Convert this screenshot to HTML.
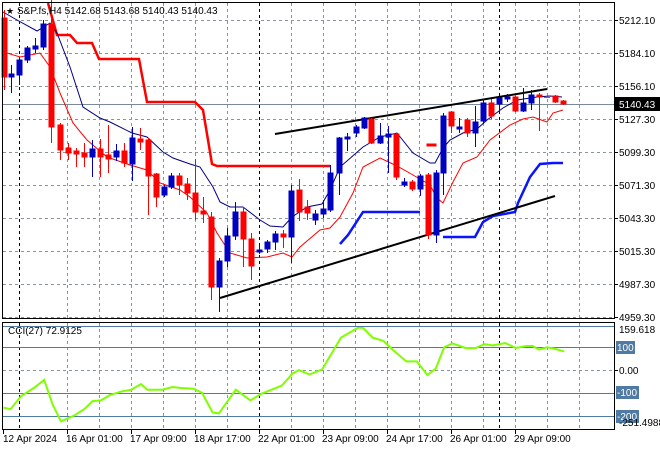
<!DOCTYPE html>
<html><head><meta charset="utf-8"><style>
html,body{margin:0;padding:0;background:#fff;width:660px;height:450px;overflow:hidden}
svg{display:block;font-family:"Liberation Sans",sans-serif;font-size:10px}
</style></head><body>
<svg width="660" height="450" viewBox="0 0 660 450" xmlns="http://www.w3.org/2000/svg">
<rect width="660" height="450" fill="#fff"/>
<!-- grid main -->
<g stroke="#8a949c" stroke-width="1" stroke-dasharray="3,3" fill="none">
<path d="M3 20.5H614M3 53.5H614M3 86.5H614M3 119.5H614M3 152.5H614M3 185.5H614M3 218.5H614M3 251.5H614M3 284.5H614M3 317.5H614"/>
<path d="M67.5 3V318M99.5 3V318M131.5 3V318M163.5 3V318M195.5 3V318M227.5 3V318M291.5 3V318M323.5 3V318M355.5 3V318M387.5 3V318M419.5 3V318M451.5 3V318M483.5 3V318M515.5 3V318M547.5 3V318M579.5 3V318"/>
<path d="M67.5 323V429M99.5 323V429M131.5 323V429M163.5 323V429M195.5 323V429M227.5 323V429M291.5 323V429M323.5 323V429M355.5 323V429M387.5 323V429M419.5 323V429M451.5 323V429M483.5 323V429M515.5 323V429M547.5 323V429M579.5 323V429"/>
<path d="M3 370.5H614"/>
</g>
<g stroke="#000" stroke-width="1" stroke-dasharray="3,3">
<path d="M19.5 3V318M259.5 3V318M499.5 3V318M19.5 323V429M259.5 323V429M499.5 323V429"/>
</g>
<path d="M3 104.5H614" stroke="#7a8a98" stroke-width="1"/>
<!-- thick red step -->
<polyline fill="none" stroke="#f00" stroke-width="2.5" points="48,3 57,35 70,35 77,43 92,43 99,59 139,59 147,102 195,102 203,110 212,164 217,166 330,166"/>
<!-- thick blue steps -->
<polyline fill="none" stroke="#0a14ff" stroke-width="2.5" points="340,244 348,235 363,212 420,212"/>
<polyline fill="none" stroke="#0a14ff" stroke-width="2.5" points="443,237 475,237 483,222 493,216 515,212 518,203 530,177 540,164 553,163 563,163"/>
<!-- blue MA -->
<polyline fill="none" stroke="#000080" stroke-width="1" points="3,12 17,20 37,31 50,23 57,33 70,67 83,107 100,118 110,122 132,133 147,137 163,152 173,158 190,164 200,167 213,187 220,202 230,207 243,207 260,220 270,226 283,227 292,217 307,207 322,204 330,190 340,167 363,147 380,137 397,133 413,153 430,163 435,163 443,148 450,140 463,133 477,129 487,120 503,108 517,100 537,97 550,96 562,97"/>
<!-- red MA -->
<polyline fill="none" stroke="#f00" stroke-width="1" points="3,37 7,53 20,57 40,53 50,67 60,93 73,123 87,140 107,157 130,165 147,170 160,183 180,190 190,197 207,213 217,233 230,253 247,258 267,257 283,253 292,257 300,247 320,230 330,228 340,217 353,193 363,167 380,158 397,166 413,175 430,185 437,198 443,203 453,182 463,163 477,157 490,140 510,125 523,119 533,117 547,122 553,113 563,110"/>
<!-- trend lines -->
<path d="M275 134L547 89M220 298L555 196" stroke="#000" stroke-width="2"/>
<!-- candles -->
<g stroke-width="1">
<g stroke="#f00" fill="#f00">
<path d="M4.5 10V90M51.5 0V143M60.5 123V160M68.5 143V160M76.5 148V167M84.5 143V167M100.5 139V177M108.5 125V173M124.5 143V167M140.5 128V150M148.5 138V215M156.5 173V207M179.5 173V195M187.5 178V200M195.5 159V220M203.5 197V223M211.5 212V300M243.5 207V267M251.5 233V280M283.5 230V248M299.5 179V221M307.5 200V220M371.5 118V144M396.5 133V180M412.5 180V191M428.5 173V239M451.5 111V133M467.5 118V137M491.5 99V119M515.5 96V112M539.5 93V131M555.5 95V103M563.5 100V105"/>
<rect x="2" y="18" width="5" height="59"/><rect x="49" y="24" width="5" height="103"/><rect x="58" y="125" width="5" height="25"/>
<rect x="66" y="148" width="5" height="5"/><rect x="74" y="151" width="5" height="3"/><rect x="82" y="153" width="5" height="4"/>
<rect x="98" y="149" width="5" height="8"/><rect x="106" y="155" width="5" height="4"/><rect x="122" y="151" width="5" height="12"/>
<rect x="138" y="139" width="5" height="3"/><rect x="146" y="140" width="5" height="36"/><rect x="154" y="174" width="5" height="23"/>
<rect x="177" y="176" width="5" height="9"/><rect x="185" y="184" width="5" height="9"/><rect x="193" y="193" width="5" height="19"/>
<rect x="201" y="211" width="5" height="3"/><rect x="209" y="217" width="5" height="70"/><rect x="241" y="212" width="5" height="27"/>
<rect x="249" y="239" width="5" height="27"/><rect x="281" y="234" width="5" height="3"/><rect x="297" y="190" width="5" height="22"/>
<rect x="305" y="207" width="5" height="6"/><rect x="369" y="119" width="5" height="24"/><rect x="394" y="134" width="5" height="43"/>
<rect x="410" y="182" width="5" height="7"/><rect x="427" y="144" width="9" height="2"/><rect x="426" y="175" width="5" height="60"/>
<rect x="449" y="112" width="5" height="14"/><rect x="465" y="120" width="5" height="13"/><rect x="489" y="103" width="5" height="13"/>
<rect x="513" y="97" width="5" height="14"/><rect x="537" y="95" width="5" height="2"/><rect x="553" y="96" width="5" height="6"/><rect x="561" y="101" width="5" height="3"/>
</g>
<g stroke="#0000c0" fill="#0000c0">
<path d="M11.5 65V93M19.5 58V85M27.5 46V63M35.5 38V53M43.5 20V50M92.5 140V177M116.5 144V161M132.5 127V181M164.5 185V197M171.5 173V189M219.5 258V312M227.5 228V267M235.5 202V240M259.5 245V254M267.5 240V253M275.5 231V250M291.5 185V263M315.5 210V225M323.5 200V218M330.5 165V212M339.5 137V195M347.5 133V151M356.5 125V137M364.5 117V129M380.5 123V144M388.5 126V173M404.5 178V187M420.5 174V196M436.5 170V243M443.5 113V195M459.5 118V133M475.5 106V147M483.5 99V124M499.5 97V110M507.5 94V102M523.5 88V112M531.5 90V110"/>
<rect x="9" y="74" width="5" height="3"/><rect x="17" y="60" width="5" height="15"/><rect x="25" y="48" width="5" height="12"/>
<rect x="33" y="46" width="5" height="3"/><rect x="41" y="24" width="5" height="23"/><rect x="90" y="149" width="5" height="8"/>
<rect x="114" y="151" width="5" height="6"/><rect x="130" y="138" width="5" height="26"/><rect x="162" y="187" width="5" height="8"/>
<rect x="169" y="176" width="5" height="11"/><rect x="217" y="261" width="5" height="26"/><rect x="225" y="236" width="5" height="25"/>
<rect x="233" y="212" width="5" height="24"/><rect x="257" y="250" width="5" height="2"/><rect x="265" y="242" width="5" height="7"/>
<rect x="273" y="234" width="5" height="8"/><rect x="289" y="191" width="5" height="46"/><rect x="313" y="214" width="5" height="6"/>
<rect x="321" y="209" width="5" height="5"/><rect x="328" y="173" width="5" height="37"/><rect x="337" y="138" width="5" height="35"/>
<rect x="345" y="137" width="5" height="2"/><rect x="354" y="127" width="5" height="6"/><rect x="362" y="118" width="5" height="10"/>
<rect x="378" y="136" width="5" height="7"/><rect x="386" y="134" width="5" height="3"/><rect x="402" y="182" width="5" height="3"/>
<rect x="418" y="176" width="5" height="13"/><rect x="434" y="173" width="5" height="62"/><rect x="441" y="116" width="5" height="57"/>
<rect x="457" y="127" width="5" height="2"/><rect x="473" y="122" width="5" height="11"/><rect x="481" y="103" width="5" height="18"/>
<rect x="497" y="98" width="5" height="6"/><rect x="505" y="97" width="5" height="2"/><rect x="521" y="103" width="5" height="8"/><rect x="529" y="95" width="5" height="8"/>
</g>
<path d="M544 97.5H550" stroke="#2a2" stroke-width="1"/>
</g>
<!-- CCI levels -->
<path d="M3 347.5H614M3 393.5H614M3 416.5H614" stroke="#4f7aa3" stroke-width="1"/>
<polyline fill="none" stroke="#7fff00" stroke-width="2" points="3.4,407.6 10.5,409.2 21,396.2 33.7,388 44.2,379.9 52.6,404.4 61,421.3 73.7,415.8 84.2,409.2 92.6,401.1 101,400.4 109.5,395.2 122.1,391.3 130.5,390 141,384.1 147.4,389.7 162.1,389.7 172.6,387 181,388 193.7,388.7 202.1,392.9 212.6,412.5 218.9,413.4 235.8,389.7 250.5,400.4 261,393.9 271.6,389.7 282.1,385.4 292.6,373.4 298.9,370.1 309.5,374.4 322.1,369.5 341,337.6 357.9,327.8 362.9,327.8 372.6,337.6 383.2,340.8 393.7,350.6 406.3,361.4 416.8,361.4 427.4,375 435.8,368.5 444.2,347.3 452.6,343.4 465.3,348 475.8,348 484.2,344.1 492.6,345.4 505.3,343.1 515.8,348 526.3,346 532.6,346 538.9,349.6 547.4,347.3 555.8,349 564.2,351.6"/>
<!-- frames -->
<g fill="none" stroke="#000" stroke-width="1">
<rect x="2.5" y="2.5" width="612" height="316"/>
<rect x="2.5" y="322.5" width="612" height="107"/>
</g>
<path d="M3 326.5H614" stroke="#4f7aa3"/>
<!-- axis ticks -->
<g stroke="#000"><path d="M614 20.5h4M614 53.5h4M614 86.5h4M614 119.5h4M614 152.5h4M614 185.5h4M614 218.5h4M614 251.5h4M614 284.5h4M614 317.5h4M614 370.5h4M3.5 430v4M67.5 430v4M131.5 430v4M195.5 430v4M259.5 430v4M323.5 430v4M387.5 430v4M451.5 430v4M515.5 430v4"/></g>
<g fill="#000">
<text x="619" y="24">5212.10</text><text x="619" y="57">5184.10</text><text x="619" y="90">5156.10</text>
<text x="619" y="123">5127.30</text><text x="619" y="156">5099.30</text><text x="619" y="189">5071.30</text>
<text x="619" y="222">5043.30</text><text x="619" y="255">5015.30</text><text x="619" y="288">4987.30</text><text x="619" y="321">4959.30</text>
</g>
<rect x="615" y="97" width="45" height="14" fill="#000"/>
<text x="619" y="108" fill="#fff">5140.43</text>
<!-- CCI labels -->
<rect x="616" y="341" width="19" height="13" fill="#4f7aa3"/><text x="617" y="351" fill="#fff">100</text>
<rect x="616" y="386" width="23" height="13" fill="#4f7aa3"/><text x="617" y="396" fill="#fff">-100</text>
<rect x="616" y="410" width="23" height="13" fill="#4f7aa3"/><text x="617" y="420" fill="#fff">-200</text>
<text x="619" y="333" fill="#000">159.618</text><text x="619" y="374" fill="#000">0.00</text><text x="619" y="426" fill="#000">-251.4988</text>
<text x="8" y="334" fill="#000">CCI(27) 72.9125</text>
<!-- header -->
<text x="6" y="14" fill="#000" font-size="9">★</text>
<text x="17" y="14" fill="#000">S&amp;P.fs,H4  5142.68 5143.68 5140.43 5140.43</text>
<!-- dates -->
<g fill="#000">
<text x="3" y="442">12 Apr 2024</text><text x="66" y="442">16 Apr 01:00</text><text x="130" y="442">17 Apr 09:00</text>
<text x="194" y="442">18 Apr 17:00</text><text x="258" y="442">22 Apr 01:00</text><text x="322" y="442">23 Apr 09:00</text>
<text x="386" y="442">24 Apr 17:00</text><text x="450" y="442">26 Apr 01:00</text><text x="514" y="442">29 Apr 09:00</text>
</g>
</svg>
</body></html>
